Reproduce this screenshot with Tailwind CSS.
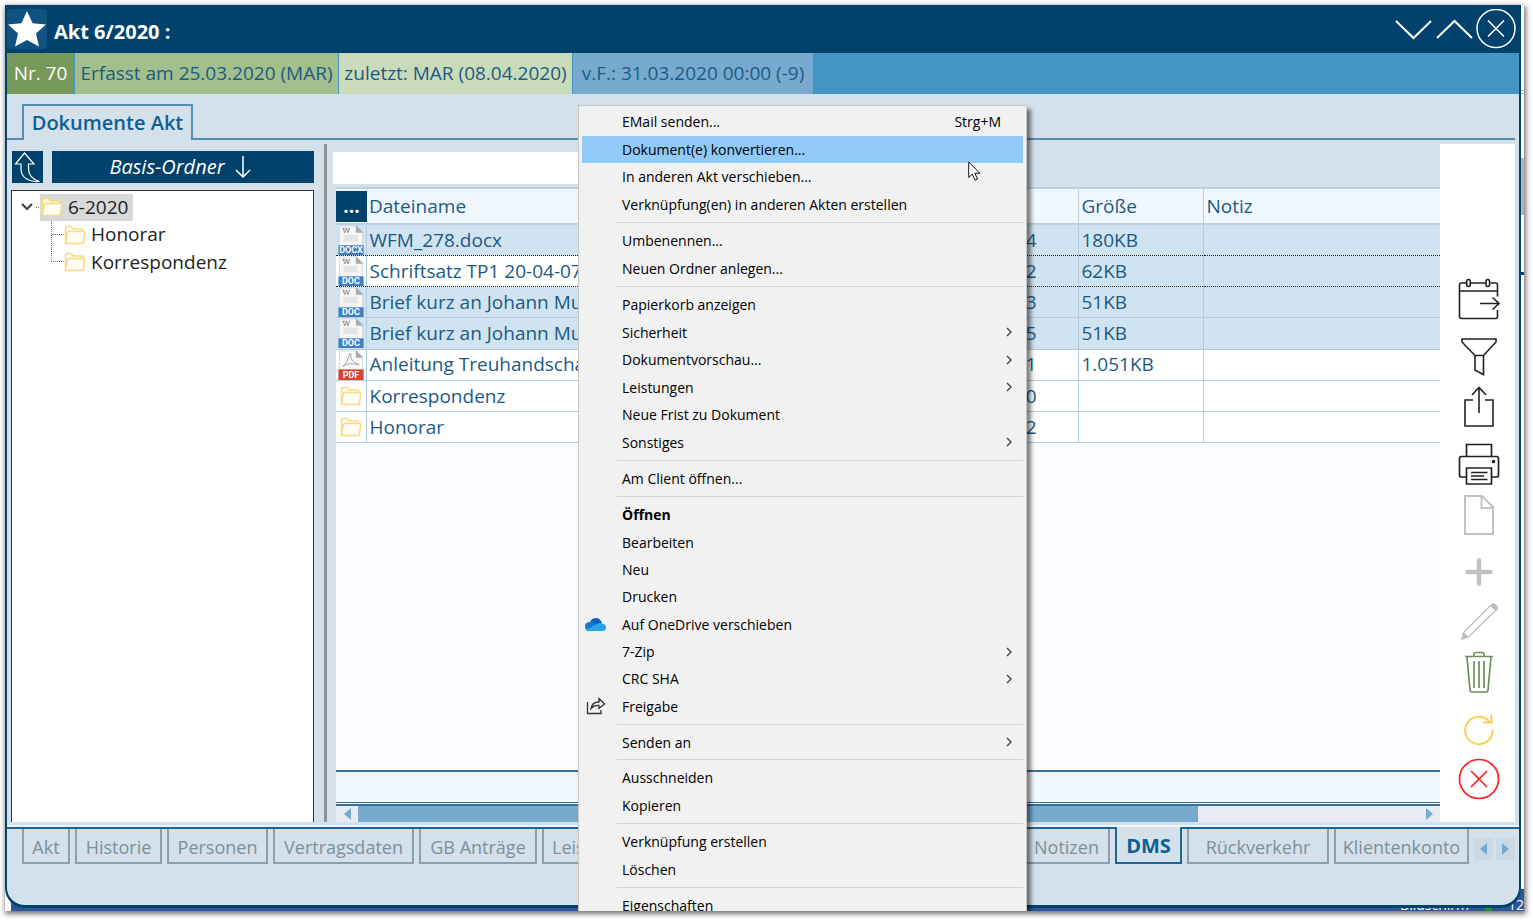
<!DOCTYPE html>
<html lang="de">
<head>
<meta charset="utf-8">
<title>Akt 6/2020</title>
<script src="https://cdn.jsdelivr.net/npm/@tailwindcss/browser@4"></script>
</head>
<body class="h-screen overflow-hidden bg-white pt-[5px] pr-[9px] pb-[9px] pl-[5px] font-['Open_Sans','Noto_Sans',sans-serif] text-[19px] text-[#1c5a85]">

<svg class="hidden" aria-hidden="true">
  <symbol id="folder" viewBox="0 0 22 20">
    <path d="M1.5 18V2.5q0-1 1-1h4.600l2 2.500h8.400q1 0 1 1v1.800M1.500 18.500 3.300 7.500q.2-1 1.200-1h15.300q1 0 .9 1l-1.200 10q-.2 1-1.200 1z" fill="#fffdf4" stroke="#f8dc7c" stroke-width="1.500"/>
  </symbol>
  <symbol id="word" viewBox="0 0 26 31">
    <path d="M1 1h17l7 7v22H1z" fill="#f7f7f7" stroke="#d5d9dc"/>
    <path d="M18 0v8h8z" fill="#a9abad"/>
    <path d="M4 3.500h2.500M7.500 3.500h1.500M10.500 3.500H12M5 3.500l1.500 4.500L8.300 3.500l1.500 4.500L11.500 3.500" fill="none" stroke="#8c8c8c"/>
    <path d="M5 10h15v7H5z" fill="#e4e6e6"/>
    <path d="M0 21h26v10H0z" fill="#3f7fc4"/>
  </symbol>
  <symbol id="pdf" viewBox="0 0 26 31">
    <path d="M1 1h17l7 7v22H1z" fill="#fafafa" stroke="#d5d9dc"/>
    <path d="M18 0v8h8z" fill="#a9abad"/>
    <path d="M4.500 17c3-2.500 6-7 6.800-12.500.2-1.500 1.800-1.500 1.500.3C12.300 8.500 15 13 20 14c2 .6 1 2-1 1.200-4-1.700-8.500-1.200-12 .3-1.500 1-3 2.500-2.500 1.500z" fill="none" stroke="#a0a0a0"/>
    <path d="M0 20h26v11H0z" fill="#d8452f"/>
  </symbol>
  <symbol id="more" viewBox="0 0 8 10"><path d="M2 1l4 4-4 4" fill="none" stroke="#444" stroke-width="1.400"/></symbol>
</svg>

<div class="relative h-full overflow-hidden bg-white shadow-[1px_2px_5px_1px_rgba(0,0,0,0.55)]">

  <!-- desktop behind the window -->
  <div class="absolute inset-0 flex flex-col items-end" aria-hidden="true">
    <div class="mt-[85px] h-[4px] w-[4px] border-y border-[#bbb]"></div>
    <div class="mt-[64px] h-[57px] w-[4px] bg-[#b5b5b5]"></div>
    <div class="mt-[57px] h-[3px] w-[4px] bg-[#00426b]"></div>
    <div class="mt-auto ml-auto flex h-[22px] w-full border-l-[6px] border-white bg-[#2b579a] pt-[7px] text-[14px] leading-[17px] text-white">
      <span class="mr-4 ml-auto">Bildschirm</span><span class="mr-1 h-[15px] w-[7px] bg-[#1f9b1f]"></span><span>&lt;</span><span class="ml-1">12</span>
    </div>
  </div>

  <div class="relative mr-[3px] flex h-[calc(100%-3px)] flex-col overflow-hidden rounded-b-[20px] border-2 border-t-0 border-b-3 border-[#00426b] bg-[#d4e0ea]">

    <header class="flex h-[48px] shrink-0 items-center bg-[#00426b] pr-[3px] text-white">
      <div class="flex h-10 w-10 items-center justify-center rounded bg-[#10527f]">
        <svg class="h-[36px] w-[38px]" viewBox="0 0 38 36"><path d="M19 0l5.600 12.300L38 13.500 28 22.500 31 35.500 19 29 7 35.500 10 22.500 0 13.500 13.400 12.300z" fill="#fff"/></svg>
      </div>
      <h1 class="ml-[7px] pt-[6px] text-[20px] font-bold">Akt 6/2020 :</h1>
      <div class="ml-auto flex items-center">
        <button aria-label="Nach unten" class="h-10 w-[41px]"><svg class="h-10 w-[41px]" viewBox="0 0 41 40"><path d="M2 12l17.500 17L37 12" fill="none" stroke="#fff" stroke-width="2"/></svg></button>
        <button aria-label="Nach oben" class="h-10 w-[41px]"><svg class="h-10 w-[41px]" viewBox="0 0 41 40"><path d="M2 29l17.500-17L37 29" fill="none" stroke="#fff" stroke-width="2"/></svg></button>
        <button aria-label="Schließen" class="h-10 w-10"><svg class="h-10 w-10" viewBox="0 0 40 40" fill="none" stroke="#fff" stroke-width="1.500"><circle cx="20" cy="19.500" r="19"/><path d="M12 11.500l16 16M28 11.500L12 27.500"/></svg></button>
      </div>
    </header>

    <div class="flex h-[41px] shrink-0 gap-px bg-[#4494c5] leading-[41px] whitespace-nowrap">
      <span class="w-[67px] bg-[#76995a] text-center text-white">Nr. 70</span>
      <span class="w-[263px] bg-[#a3bf8c] text-center">Erfasst am 25.03.2020 (MAR)</span>
      <span class="w-[233px] bg-[#cadbba] text-center">zuletzt: MAR (08.04.2020)</span>
      <span class="w-[240px] bg-[#78aad0] text-center">v.F.: 31.03.2020 00:00 (-9)</span>
    </div>

    <nav class="mt-[10px] flex h-[36px] shrink-0" aria-label="Ansicht">
      <span class="w-[15px] border-b-2 border-[#4f8fb8]"></span>
      <button class="w-[171px] border-2 border-b-0 border-[#4f8fb8] text-[20px] font-semibold text-[#0e5f96]">Dokumente Akt</button>
      <span class="mr-1 flex-1 border-b-2 border-[#4f8fb8]"></span>
    </nav>

    <main class="mt-[4px] flex min-h-0 flex-1 pr-[4px] pl-[4px]">
      <aside class="flex w-[303px] shrink-0 flex-col pt-[7px]">
        <div class="flex gap-[9px] pl-[1px]">
          <button aria-label="Ebene nach oben" class="h-[32px] w-[31px] bg-[#00426b]"><svg class="h-[32px] w-[31px]" viewBox="0 0 31 32"><path d="M12.500 2L3.500 13H9v5q0 8.500 9 11.500 4 1.500 9.500 1Q16.500 27 16.500 18v-5h5.500z" fill="none" stroke="#fff" stroke-width="1.200"/></svg></button>
          <button class="flex h-[32px] flex-1 items-center justify-center gap-[10px] bg-[#00426b] pr-[6px] text-[20px] text-white italic">Basis-Ordner
            <svg class="h-[22px] w-[16px]" viewBox="0 0 16 22"><path d="M8 0v21M1 14l7 7 7-7" fill="none" stroke="#fff" stroke-width="1.500"/></svg>
          </button>
        </div>
        <ul class="mt-[7px] flex-1 border border-b-0 border-[#333] bg-white pt-[2px] text-[#222]">
          <li>
            <div class="flex h-[28px] items-center pl-[9px]">
              <svg class="h-[8px] w-[12px]" viewBox="0 0 12 8"><path d="M1 1l5 5 5-5" fill="none" stroke="#444" stroke-width="2.200"/></svg>
              <span class="mr-px ml-[3px] w-[3px] border-t border-dotted border-[#777]"></span>
              <span class="flex h-[27px] items-center gap-[5px] bg-[#d9d9d9] pr-[5px] pl-px"><svg class="h-[20px] w-[22px]"><use href="#folder"/></svg>6-2020</span>
            </div>
            <ul class="ml-[39px]">
              <li class="flex h-[27px] items-center"><span class="h-full w-[13px] border-l border-dotted border-[#777] pt-[13px]"><span class="block border-t border-dotted border-[#777]"></span></span><svg class="mr-[5px] h-[20px] w-[22px]"><use href="#folder"/></svg>Honorar</li>
              <li class="flex h-[28px] items-center"><span class="mb-[14px] h-[14px] w-[13px] border-b border-l border-dotted border-[#777]"></span><svg class="mr-[5px] h-[20px] w-[22px]"><use href="#folder"/></svg>Korrespondenz</li>
            </ul>
          </li>
        </ul>
      </aside>
      <div class="ml-[10px] w-[3px] shrink-0 bg-[#8f9295]"></div>
      <section class="ml-[6px] flex min-w-0 flex-1 flex-col pt-[8px]">
        <input type="text" aria-label="Dokumente filtern" class="h-[32px] w-[480px] shrink-0 bg-white px-2 outline-none">
        <div class="mt-[3px] ml-[3px] flex min-h-0 flex-1 flex-col bg-[#fbfcff]">
          <table class="h-[256px] w-full table-fixed border-collapse text-left whitespace-nowrap">
            <colgroup><col class="w-[30px]"><col class="w-[430px]"><col><col class="w-[125px]"><col class="w-[237px]"></colgroup>
            <thead>
              <tr class="h-[36px] border-y-2 border-[#bcd0e0] bg-[#f0f7ff]">
                <th class="p-0"><button aria-label="Spalten" class="block h-[31px] w-[31px] bg-[#00426b] text-white">...</button></th>
                <th class="px-[3px] font-normal">Dateiname</th><th></th>
                <th class="border-r border-[#bcd0e0] border-l px-[3px] font-normal">Größe</th>
                <th class="px-[3px] font-normal">Notiz</th>
              </tr>
            </thead>
            <tbody>
              <tr class="h-[31px] bg-[#d0e3f0]"><td class="border-r border-[#b3cbdc] p-0"><div class="relative ml-[2px] h-[30px] w-[26px]"><svg class="h-[30px] w-[26px]"><use href="#word"/></svg><b class="absolute inset-x-0 bottom-0 text-center font-['Roboto',sans-serif] text-[9px] leading-[9px] text-white">DOCX</b></div></td><td class="px-[3px] py-0">WFM_278.docx</td><td class="py-0 pr-[41px] text-right">4</td><td class="border-x border-[#b3cbdc] px-[3px] py-0">180KB</td><td></td></tr>
              <tr class="h-[31px] border-y border-dotted border-[#222] bg-[#d0e3f0]"><td class="border-r border-[#b3cbdc] bg-white p-0"><div class="relative ml-[2px] h-[30px] w-[26px]"><svg class="h-[30px] w-[26px]"><use href="#word"/></svg><b class="absolute inset-x-0 bottom-0 text-center font-['Roboto',sans-serif] text-[9px] leading-[9px] text-white">DOC</b></div></td><td class="bg-white px-[3px] py-0">Schriftsatz TP1 20-04-07</td><td class="py-0 pr-[41px] text-right">2</td><td class="border-x border-[#b3cbdc] px-[3px] py-0">62KB</td><td></td></tr>
              <tr class="h-[31px] border-b border-[#b3cbdc] bg-[#d0e3f0]"><td class="border-r border-[#b3cbdc] p-0"><div class="relative ml-[2px] h-[30px] w-[26px]"><svg class="h-[30px] w-[26px]"><use href="#word"/></svg><b class="absolute inset-x-0 bottom-0 text-center font-['Roboto',sans-serif] text-[9px] leading-[9px] text-white">DOC</b></div></td><td class="px-[3px] py-0">Brief kurz an Johann Muster</td><td class="py-0 pr-[41px] text-right">3</td><td class="border-x border-[#b3cbdc] px-[3px] py-0">51KB</td><td></td></tr>
              <tr class="h-[31px] border-b border-[#b3cbdc] bg-[#d0e3f0]"><td class="border-r border-[#b3cbdc] p-0"><div class="relative ml-[2px] h-[30px] w-[26px]"><svg class="h-[30px] w-[26px]"><use href="#word"/></svg><b class="absolute inset-x-0 bottom-0 text-center font-['Roboto',sans-serif] text-[9px] leading-[9px] text-white">DOC</b></div></td><td class="px-[3px] py-0">Brief kurz an Johann Muster</td><td class="py-0 pr-[41px] text-right">5</td><td class="border-x border-[#b3cbdc] px-[3px] py-0">51KB</td><td></td></tr>
              <tr class="h-[31px] border-b border-[#b3cbdc] bg-white"><td class="border-r border-[#b3cbdc] p-0"><div class="relative ml-[2px] h-[30px] w-[26px]"><svg class="h-[30px] w-[26px]"><use href="#pdf"/></svg><b class="absolute inset-x-0 bottom-0 text-center font-['Roboto',sans-serif] text-[9px] leading-[9px] text-white">PDF</b></div></td><td class="px-[3px] py-0">Anleitung Treuhandschaft</td><td class="py-0 pr-[41px] text-right">1</td><td class="border-x border-[#b3cbdc] px-[3px] py-0">1.051KB</td><td></td></tr>
              <tr class="h-[31px] border-b border-[#b3cbdc] bg-white"><td class="border-r border-[#b3cbdc] p-0"><svg class="ml-[4px] h-[20px] w-[22px]"><use href="#folder"/></svg></td><td class="px-[3px] py-0">Korrespondenz</td><td class="py-0 pr-[41px] text-right">0</td><td class="border-x border-[#b3cbdc]"></td><td></td></tr>
              <tr class="h-[31px] border-b border-[#b3cbdc] bg-white"><td class="border-r border-[#b3cbdc] p-0"><svg class="ml-[4px] h-[20px] w-[22px]"><use href="#folder"/></svg></td><td class="px-[3px] py-0">Honorar</td><td class="py-0 pr-[41px] text-right">2</td><td class="border-x border-[#b3cbdc]"></td><td></td></tr>
            </tbody>
          </table>
          <div class="mt-auto h-[33px] shrink-0 border-t-2 border-b border-[#3a7399] bg-[#f0f7ff]"></div>
          <div class="mt-px flex h-[18px] shrink-0 border-t-2 border-[#3a7399] bg-[#e8ecf2]">
            <button aria-label="Nach links" class="flex w-[22px] items-center justify-center"><svg class="h-[12px] w-[7px]" viewBox="0 0 7 12"><path d="M7 0v12L0 6z" fill="#78aad0"/></svg></button>
            <div class="w-[840px] bg-[#78aad0]"></div>
            <button aria-label="Nach rechts" class="ml-auto flex w-[22px] items-center justify-center"><svg class="h-[12px] w-[7px]" viewBox="0 0 7 12"><path d="M0 0v12l7-6z" fill="#78aad0"/></svg></button>
          </div>
        </div>
      </section>

      <aside class="flex w-[75px] shrink-0 flex-col items-center bg-white pt-[134px] pl-[2px]" aria-label="Werkzeuge">
        <button aria-label="Frist"><svg class="block h-[42px] w-[42px]" viewBox="0 0 42 42" fill="none" stroke="#222" stroke-width="1.600"><path d="M8.500 5H3.500q-2 0-2 2v31.500q0 2 2 2H38q1.500 0 1.500-2V32M13 5h14.500M32.500 5H38q1.500 0 1.500 2v11.500M1.500 13h38M22 25.500h18M34.500 19.500l6.500 6-6.500 6"/><rect x="8.700" y="1.500" width="3.600" height="7" rx="1.700"/><rect x="28" y="1.500" width="3.600" height="7" rx="1.700"/></svg></button>
        <button aria-label="Filter" class="mt-[17px]"><svg class="block h-[40px] w-[38px]" viewBox="0 0 38 40" fill="none" stroke="#222" stroke-width="1.600"><path d="M2 2h34v3L23.500 18.500v19.200L15 33V18.500L2 5zM15 18.500h8.500"/></svg></button>
        <button aria-label="Exportieren" class="mt-[9px]"><svg class="block h-[42px] w-[32px]" viewBox="0 0 32 42" fill="none" stroke="#222" stroke-width="1.600"><path d="M10 14H2v26h28V14h-8M16 27V2M9 9l7-7.500L23 9"/></svg></button>
        <button aria-label="Drucken" class="mt-[15px]"><svg class="block h-[42px] w-[42px]" viewBox="0 0 42 42" fill="none" stroke="#222" stroke-width="1.700"><path d="M8.500 13V1.500h25V13M8.500 34H3q-1.500 0-1.500-2V15.500q0-2 2-2h35q2 0 2 2V32q0 2-1.500 2h-5.500M8.500 25h25v16h-25zM13 29.500h16.500M13 33h13M13 36.500h16.500"/><circle cx="35.500" cy="18.500" r="1" fill="#222"/></svg></button>
        <button aria-label="Neues Dokument" class="mt-[9px]"><svg class="block h-[42px] w-[32px]" viewBox="0 0 32 42" fill="none" stroke="#c2c2c2" stroke-width="2"><path d="M2 2h17l11 11v27H2zM18.500 2v12H30"/></svg></button>
        <button aria-label="Hinzufügen" class="mt-[22px]"><svg class="block h-[28px] w-[28px]" viewBox="0 0 28 28"><path d="M14 2.500v23M2.500 14h23" stroke="#c2c2c2" stroke-width="4.500" stroke-linecap="round"/></svg></button>
        <button aria-label="Bearbeiten" class="mt-[17px]"><svg class="block h-[38px] w-[38px]" viewBox="0 0 38 38" fill="none" stroke="#bcbcbc" stroke-width="1.300"><path d="M2 36l2-7L30 3M2 36l7-2.500L35 8"/><path d="M2 36l1.500-6 4.500 4zM30.500 2.500q3-2.500 5.500 0t0 5z" fill="#bcbcbc"/></svg></button>
        <button aria-label="Löschen" class="mt-[10px]"><svg class="block h-[42px] w-[30px]" viewBox="0 0 30 42" fill="none" stroke="#6c8f58" stroke-width="1.700"><path d="M1 5.500h28M10 5V3.500q0-2 2-2h6q2 0 2 2V5M3 6l3 33q.2 2 2 2h14q1.800 0 2-2l3-33M10 10v27M15 10v27M20 10v27"/></svg></button>
        <button aria-label="Aktualisieren" class="mt-[20px]"><svg class="block h-[32px] w-[32px]" viewBox="0 0 32 32" fill="none" stroke="#fbd04c" stroke-width="1.900"><path d="M29.500 16.500A13.700 13.700 0 1 1 27 9.500M28.500 1.500V9.500H20"/></svg></button>
        <button aria-label="Abbrechen" class="mt-[13px]"><svg class="block h-[42px] w-[42px]" viewBox="0 0 42 42" fill="none" stroke="#ff2020" stroke-width="1.700"><circle cx="21" cy="21" r="19.500"/><path d="M13 13l16 16M29 13L13 29"/></svg></button>
      </aside>
    </main>

    <nav class="mt-[3px] shrink-0 border-t-2 border-[#eef3f8] pb-[41px]" aria-label="Bereiche">
      <div class="flex h-[37px] gap-[5px] border-t-2 border-[#1d6597] pl-[15px] text-[18px] whitespace-nowrap text-[#7e8f9b] [&>button]:pt-[3px]">
        <button class="w-[48px] shrink-0 border-2 border-t-0 border-[#8ba0af]">Akt</button>
        <button class="w-[87px] shrink-0 border-2 border-t-0 border-[#8ba0af]">Historie</button>
        <button class="w-[101px] shrink-0 border-2 border-t-0 border-[#8ba0af]">Personen</button>
        <button class="w-[141px] shrink-0 border-2 border-t-0 border-[#8ba0af]">Vertragsdaten</button>
        <button class="w-[118px] shrink-0 border-2 border-t-0 border-[#8ba0af]">GB Anträge</button>
        <button class="min-w-0 flex-1 border-2 border-t-0 border-[#8ba0af] pl-[8px] text-left">Leistungen</button>
        <button class="w-[87px] shrink-0 border-2 border-t-0 border-[#8ba0af]">Notizen</button>
        <button class="-mt-[2px] w-[67px] shrink-0 border-2 border-t-0 border-[#1d6597] bg-[#d4e0ea] text-[20px] font-bold text-[#0e5f96]">DMS</button>
        <button class="w-[142px] shrink-0 border-2 border-t-0 border-[#8ba0af]">Rückverkehr</button>
        <button class="w-[135px] shrink-0 border-2 border-t-0 border-[#8ba0af]">Klientenkonto</button>
        <div class="mr-[4px] flex shrink-0 items-center gap-[3px] pt-[4px]">
          <button aria-label="Vorige" class="flex h-[22px] w-[19px] items-center justify-center bg-[#cbd9e5]"><svg class="h-[12px] w-[7px]" viewBox="0 0 7 12"><path d="M7 0v12L0 6z" fill="#78aad0"/></svg></button>
          <button aria-label="Nächste" class="flex h-[22px] w-[19px] items-center justify-center bg-[#cbd9e5]"><svg class="h-[12px] w-[7px]" viewBox="0 0 7 12"><path d="M0 0v12l7-6z" fill="#78aad0"/></svg></button>
        </div>
      </div>
    </nav>
  </div>

  <!-- context menu -->
  <div role="menu" class="absolute top-[100px] left-[573px] w-[449px] border border-[#c6c6c6] bg-[#f1f1f1] px-[3px] pt-[2px] text-[14px] text-black shadow-[4px_4px_4px_rgba(0,0,0,0.5)] [&_button]:flex [&_button]:w-full [&_button]:items-center [&_button]:pr-[10px] [&_button]:pl-[40px] [&_button]:text-left [&_hr]:my-[4px] [&_hr]:ml-[35px] [&_hr]:border-[#d5d5d5] [&_svg]:ml-auto">
    <div class="grid h-[110px] auto-rows-fr">
      <button role="menuitem">EMail senden...<span class="mr-[12px] ml-auto">Strg+M</span></button>
      <button role="menuitem" class="bg-[#91c9f7]">Dokument(e) konvertieren...</button>
      <button role="menuitem">In anderen Akt verschieben...</button>
      <button role="menuitem">Verknüpfung(en) in anderen Akten erstellen</button>
    </div>
    <hr>
    <div class="grid h-[55px] auto-rows-fr">
      <button role="menuitem">Umbenennen...</button>
      <button role="menuitem">Neuen Ordner anlegen...</button>
    </div>
    <hr>
    <div class="grid h-[165px] auto-rows-fr">
      <button role="menuitem">Papierkorb anzeigen</button>
      <button role="menuitem">Sicherheit<svg class="h-[10px] w-[8px]"><use href="#more"/></svg></button>
      <button role="menuitem">Dokumentvorschau...<svg class="h-[10px] w-[8px]"><use href="#more"/></svg></button>
      <button role="menuitem">Leistungen<svg class="h-[10px] w-[8px]"><use href="#more"/></svg></button>
      <button role="menuitem">Neue Frist zu Dokument</button>
      <button role="menuitem">Sonstiges<svg class="h-[10px] w-[8px]"><use href="#more"/></svg></button>
    </div>
    <hr>
    <div class="grid h-[27px] auto-rows-fr"><button role="menuitem">Am Client öffnen...</button></div>
    <hr>
    <div class="grid h-[219px] auto-rows-fr">
      <button role="menuitem" class="font-bold">Öffnen</button>
      <button role="menuitem">Bearbeiten</button>
      <button role="menuitem">Neu</button>
      <button role="menuitem">Drucken</button>
      <div class="relative grid">
        <button role="menuitem">Auf OneDrive verschieben</button>
        <svg class="absolute top-[6px] left-[3px] h-[15px] w-[21px]" viewBox="0 0 21 15"><path d="M5 7Q5 1 11 1q4 0 6 5l-5 5z" fill="#0f62b5"/><path d="M5 14Q0 14 0 9.500T5 5q3-1 6 2l4 3-8 4z" fill="#1279d4"/><path d="M4 14q-2 0-3-1.500L13 6.500q2-1 4 0 4 .5 4 4T17.500 14z" fill="#29a4ea"/></svg>
      </div>
      <button role="menuitem">7-Zip<svg class="h-[10px] w-[8px]"><use href="#more"/></svg></button>
      <button role="menuitem">CRC SHA<svg class="h-[10px] w-[8px]"><use href="#more"/></svg></button>
      <div class="relative grid">
        <button role="menuitem">Freigabe</button>
        <svg class="absolute top-[4px] left-[4px] h-[18px] w-[20px]" viewBox="0 0 20 18" fill="none" stroke="#333" stroke-width="1.300"><path d="M1.500 5v11.500H15V13M5 11.500q1-6.500 8-6.500V1.500L18.500 7 13 11.500V8.500q-5-.5-8 3z"/></svg>
      </div>
    </div>
    <hr>
    <div class="grid h-[26px] auto-rows-fr"><button role="menuitem">Senden an<svg class="h-[10px] w-[8px]"><use href="#more"/></svg></button></div>
    <hr>
    <div class="grid h-[55px] auto-rows-fr">
      <button role="menuitem">Ausschneiden</button>
      <button role="menuitem">Kopieren</button>
    </div>
    <hr>
    <div class="grid h-[55px] auto-rows-fr">
      <button role="menuitem">Verknüpfung erstellen</button>
      <button role="menuitem">Löschen</button>
    </div>
    <hr>
    <div class="grid h-[27px] auto-rows-fr"><button role="menuitem">Eigenschaften</button></div>
  </div>

  <!-- mouse pointer -->
  <svg class="absolute top-[156px] left-[963px] h-[20px] w-[13px]" viewBox="0 0 13 20"><path d="M.7 1v15.500l3.600-3.400 2.700 6 2.500-1.100-2.600-5.800h5z" fill="#fff" stroke="#111"/></svg>
</div>
</body>
</html>
